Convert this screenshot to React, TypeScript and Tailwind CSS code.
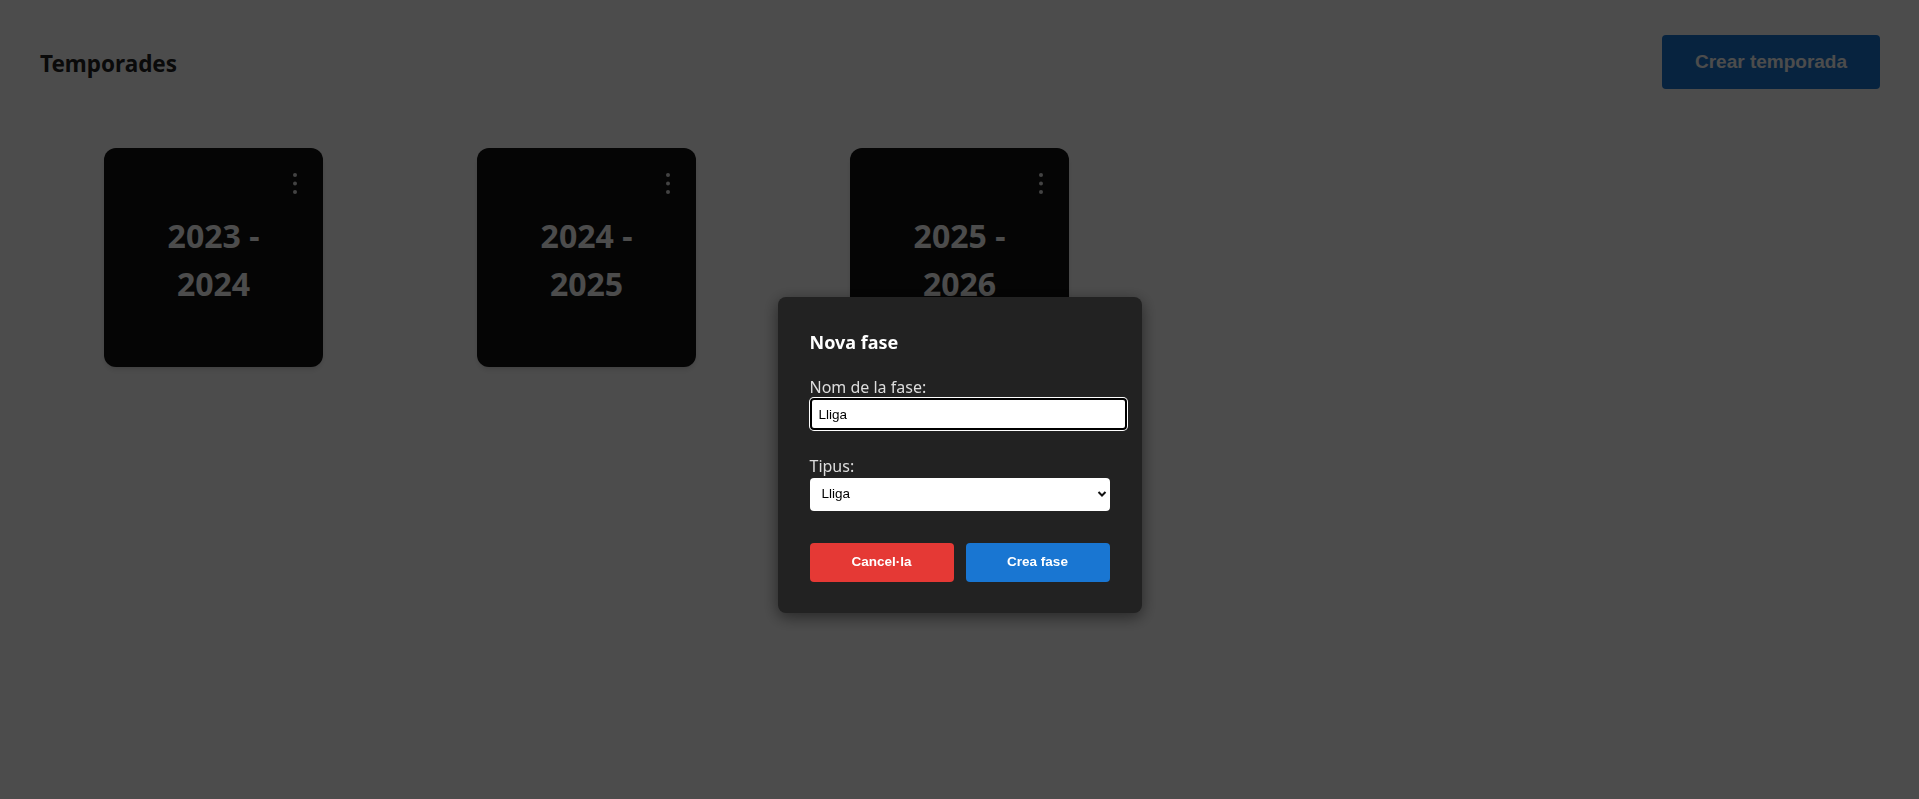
import { useState, ChangeEvent } from "react";

const seasons = ["2023 - 2024", "2024 - 2025", "2025 - 2026"];

const SeasonCard = ({ label }: { label: string }) => {
  const [first, second] = label.split(" - ");
  return (
    <div className="relative w-[219px] h-[219px] rounded-xl bg-[#111] flex items-center justify-center pt-[4px] shadow-md">
      <svg
        className="absolute top-[24px] right-[24px]"
        width="8"
        height="24"
        viewBox="0 0 8 24"
        fill="#e0e0e0"
      >
        <circle cx="4" cy="3" r="2" />
        <circle cx="4" cy="11.5" r="2" />
        <circle cx="4" cy="20" r="2" />
      </svg>
      <p className="text-white text-[32px] leading-[48px] font-bold text-center">
        {first} -
        <br />
        {second}
      </p>
    </div>
  );
};

const App = () => {
  const [name, setName] = useState<string>("Lliga");
  const [type, setType] = useState<string>("lliga");

  const handleName = (event: ChangeEvent<HTMLInputElement>) => setName(event.target.value);
  const handleType = (event: ChangeEvent<HTMLSelectElement>) => setType(event.target.value);

  return (
    <div className="relative min-h-screen bg-white font-['Noto_Sans',sans-serif]">
      {/* Header */}
      <div className="flex items-center justify-between pl-10 pr-[39px] pt-[35px]">
        <h1 className="text-[22.5px] font-bold text-[#222] mt-[3px]">Temporades</h1>
        <button className="w-[218px] h-[54px] rounded bg-[#1976d2] text-white text-[19px] font-bold font-['Liberation_Sans',Arial,sans-serif]">
          Crear temporada
        </button>
      </div>

      {/* Seasons */}
      <div className="flex gap-[154px] pl-[104px] mt-[59px]">
        {seasons.map((s) => (
          <SeasonCard key={s} label={s} />
        ))}
      </div>

      {/* Overlay + dialog */}
      <div className="fixed inset-0 bg-black/70 flex justify-center items-start pt-[297px]">
        <div className="w-[364px] rounded-lg bg-[#222] px-8 pt-8 pb-[31px] shadow-[0_4px_16px_rgba(0,0,0,0.5)]">
          <h2 className="text-white text-[18px] leading-[27px] font-bold">Nova fase</h2>

          <label className="block mt-[21px] mb-px text-[#ddd] text-[16px] leading-[20px]">
            Nom de la fase:
          </label>
          <input
            value={name}
            onChange={handleName}
            className="block w-[317px] h-[32px] px-[7px] rounded border-2 border-black ring-1 ring-white bg-white text-black text-[13.5px] font-['Liberation_Sans',Arial,sans-serif] outline-none"
          />

          <label className="block mt-[26px] mb-[2px] text-[#ddd] text-[16px] leading-[20px]">
            Tipus:
          </label>
          <div className="relative w-[300px]">
            <select
              value={type}
              onChange={handleType}
              className="block w-full h-[33px] pl-3 pr-8 rounded bg-white text-black text-[13.5px] font-['Liberation_Sans',Arial,sans-serif] appearance-none outline-none"
            >
              <option value="lliga">Lliga</option>
              <option value="eliminatoria">Eliminatòria</option>
            </select>
            <svg
              className="absolute right-[3px] top-[12px] pointer-events-none"
              width="10"
              height="8"
              viewBox="0 0 10 8"
              fill="none"
              stroke="#111"
              strokeWidth="2"
            >
              <path d="M1.5 2l3.5 3.5L8.5 2" />
            </svg>
          </div>

          <div className="flex gap-3 mt-8">
            <button className="w-[144px] h-[39px] rounded bg-[#e53935] text-white text-[13.5px] font-bold font-['Liberation_Sans',Arial,sans-serif]">
              Cancel·la
            </button>
            <button className="w-[144px] h-[39px] rounded bg-[#1976d2] text-white text-[13.5px] font-bold font-['Liberation_Sans',Arial,sans-serif]">
              Crea fase
            </button>
          </div>
        </div>
      </div>
    </div>
  );
};

export default App;
